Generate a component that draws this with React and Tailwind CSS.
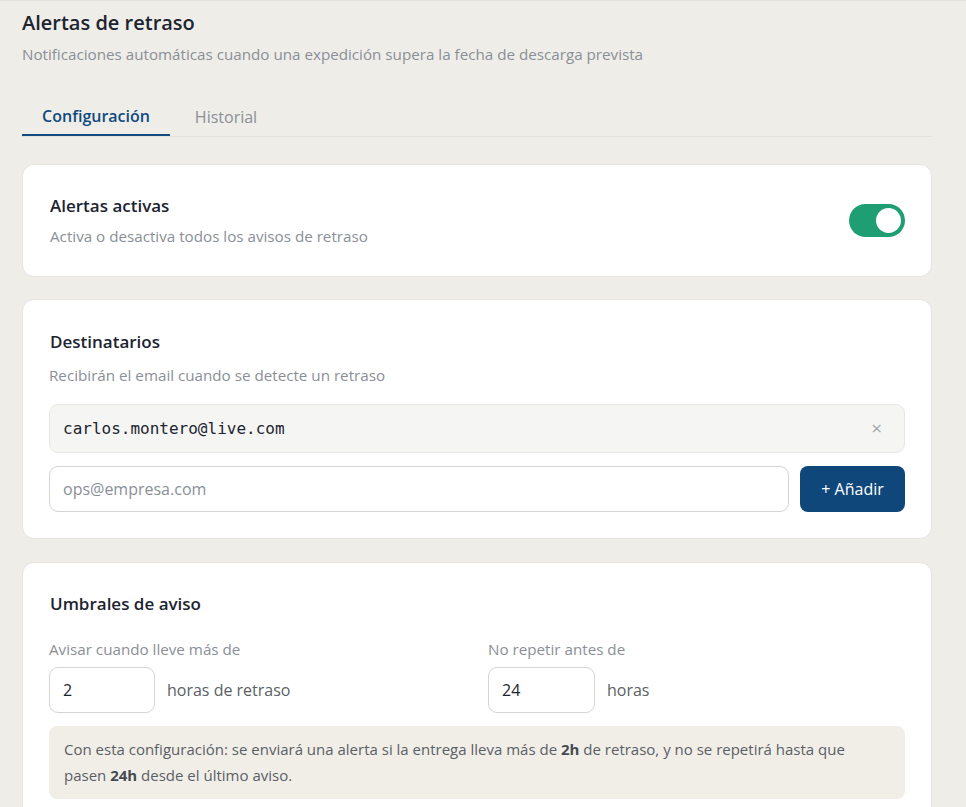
import { useState } from "react";

const Toggle = ({ on, onChange }) => (
  <button
    onClick={() => onChange(!on)}
    className={`w-[56px] h-[33px] rounded-full p-[4px] flex items-center ${on ? "bg-[#1f9e74] justify-end" : "bg-gray-300 justify-start"}`}
  >
    <span className="w-[25px] h-[25px] rounded-full bg-white block" />
  </button>
);

const Card = ({ children, className = "" }) => (
  <div className={`bg-white rounded-[12px] border border-[#e6e4df] px-[26px] ${className}`}>{children}</div>
);

export default function App() {
  const [active, setActive] = useState(true);
  const [emails, setEmails] = useState(["carlos.montero@live.com"]);
  const [draft, setDraft] = useState("");
  const [hours, setHours] = useState("2");
  const [repeat, setRepeat] = useState("24");

  // Add recipient from the input
  const addEmail = () => {
    if (!draft.trim()) return;
    setEmails([...emails, draft.trim()]);
    setDraft("");
  };

  return (
    <div className="min-h-screen bg-[#efede8] border-t border-[#e2e0db] font-['Open_Sans',sans-serif] text-[#1c2430]">
      <div className="w-[910px] ml-[22px]">
        <h1 className="pt-[8px] text-[20px] font-semibold leading-[28px]">Alertas de retraso</h1>
        <p className="mt-[6px] text-[15.2px] leading-[22px] text-[#8a8f97]">
          Notificaciones automáticas cuando una expedición supera la fecha de descarga prevista
        </p>

        <div className="mt-[30px] flex border-b border-[#e2e0db]">
          <button className="w-[148px] h-[41px] pt-[3px] text-[16px] font-semibold text-[#0f4a80] border-b-2 border-[#0f4a80] -mb-px">
            Configuración
          </button>
          <button className="ml-[4px] w-[104px] h-[41px] pt-[2px] text-[16px] text-[#8a8f97]">Historial</button>
        </div>

        <Card className="mt-[27px] h-[113px] pl-[27px] flex items-center justify-between">
          <div>
            <div className="text-[17px] font-semibold leading-[24px]">Alertas activas</div>
            <div className="mt-[7px] text-[15.2px] text-[#8a8f97] leading-[22px]">
              Activa o desactiva todos los avisos de retraso
            </div>
          </div>
          <Toggle on={active} onChange={setActive} />
        </Card>

        <Card className="mt-[22px] pt-[30px] pb-[26px]">
          <div className="pl-[1px] text-[17px] font-semibold leading-[24px]">Destinatarios</div>
          <div className="mt-[10px] text-[15.2px] text-[#8a8f97] leading-[22px]">
            Recibirán el email cuando se detecte un retraso
          </div>
          <div className="mt-[18px] flex flex-col gap-[8px]">
            {emails.map((e) => (
              <div
                key={e}
                className="h-[49px] flex items-center justify-between rounded-[9px] bg-[#f5f5f3] border border-[#e8e7e3] pl-[13px] pr-[22px]"
              >
                <span className="font-['DejaVu_Sans_Mono',monospace] text-[16px] text-[#1c2430]">{e}</span>
                <button onClick={() => setEmails(emails.filter((x) => x !== e))} className="text-[#a3a7ad] text-[19px] leading-none">
                  ×
                </button>
              </div>
            ))}
          </div>
          <div className="mt-[13px] flex gap-[11px]">
            <input
              value={draft}
              onChange={(e) => setDraft(e.target.value)}
              placeholder="ops@empresa.com"
              className="flex-1 h-[46px] rounded-[9px] border border-[#d4d4d2] px-[13px] text-[16px] placeholder-[#8a8f97] outline-none"
            />
            <button onClick={addEmail} className="w-[105px] h-[46px] rounded-[8px] bg-[#0f477b] text-white text-[16px]">
              + Añadir
            </button>
          </div>
        </Card>

        <Card className="mt-[23px] pt-[29px] pb-[24px]">
          <div className="pl-[1px] text-[17px] font-semibold leading-[24px]">Umbrales de aviso</div>
          <div className="mt-[22px] grid grid-cols-2 gap-[22px]">
            <div>
              <div className="text-[15.2px] text-[#8a8f97] leading-[22px]">Avisar cuando lleve más de</div>
              <div className="mt-[7px] flex items-center gap-[12px]">
                <input
                  value={hours}
                  onChange={(e) => setHours(e.target.value)}
                  className="w-[106px] h-[46px] rounded-[9px] border border-[#d4d4d2] px-[13px] text-[16px] outline-none"
                />
                <span className="text-[16px] text-[#5a5f66]">horas de retraso</span>
              </div>
            </div>
            <div>
              <div className="text-[15.2px] text-[#8a8f97] leading-[22px]">No repetir antes de</div>
              <div className="mt-[7px] flex items-center gap-[12px]">
                <input
                  value={repeat}
                  onChange={(e) => setRepeat(e.target.value)}
                  className="w-[107px] h-[46px] rounded-[9px] border border-[#d4d4d2] px-[13px] text-[16px] outline-none"
                />
                <span className="text-[16px] text-[#5a5f66]">horas</span>
              </div>
            </div>
          </div>
          <div className="mt-[13px] rounded-[8px] bg-[#f1eee8] px-[15px] pt-[10px] pb-[11px] text-[15px] leading-[26px] text-[#5a5f66]">
            Con esta configuración: se enviará una alerta si la entrega lleva más de{" "}
            <span className="font-bold text-[#454a52]">{hours}h</span> de retraso, y no se repetirá hasta que pasen{" "}
            <span className="font-bold text-[#454a52]">{repeat}h</span> desde el último aviso.
          </div>
        </Card>
      </div>
    </div>
  );
}
